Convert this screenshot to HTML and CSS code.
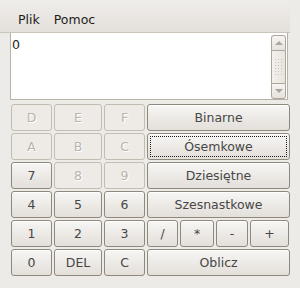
FILE: index.html
```html
<!DOCTYPE html>
<html lang="pl">
<head>
  <meta charset="UTF-8">
  <title>Kalkulator</title>
  <link rel="stylesheet" href="styles.css">
</head>
<body>
  <div class="window">
    <div class="menubar">
      <span class="menu-item">Plik</span>
      <span class="menu-item">Pomoc</span>
    </div>
    <div class="display">
      <div class="display-text">0</div>
      <div class="scrollbar">
        <div class="scroll-btn up"><span class="arrow-up"></span></div>
        <div class="scroll-thumb"><span class="grip"></span></div>
        <div class="scroll-btn down"><span class="arrow-down"></span></div>
      </div>
    </div>
    <div class="keypad">
      <div class="key disabled">D</div>
      <div class="key disabled">E</div>
      <div class="key disabled">F</div>
      <div class="key">Binarne</div>

      <div class="key disabled">A</div>
      <div class="key disabled">B</div>
      <div class="key disabled">C</div>
      <div class="key focused"><span class="focus-ring">Ósemkowe</span></div>

      <div class="key">7</div>
      <div class="key disabled">8</div>
      <div class="key disabled">9</div>
      <div class="key">Dziesiętne</div>

      <div class="key">4</div>
      <div class="key">5</div>
      <div class="key">6</div>
      <div class="key">Szesnastkowe</div>

      <div class="key">1</div>
      <div class="key">2</div>
      <div class="key">3</div>
      <div class="ops">
        <div class="key">/</div>
        <div class="key">*</div>
        <div class="key">-</div>
        <div class="key">+</div>
      </div>

      <div class="key">0</div>
      <div class="key">DEL</div>
      <div class="key">C</div>
      <div class="key">Oblicz</div>
    </div>
  </div>
</body>
</html>
```

FILE: styles.css
```css
body {
  margin: 0;
  background-color: #edebe8;
  font-family: "DejaVu Sans", sans-serif;
  font-size: 12.5px;
  line-height: 15px;
  color: #1c1c1c;
}

.window {
  width: 290px;
}

.menubar {
  height: 33px;
  display: flex;
  align-items: flex-end;
  padding: 0 0 5px 18px;
  box-sizing: border-box;
  background: linear-gradient(#efedea, #e4e0db);
  border-bottom: 1px solid #cbc4bb;
}

.menu-item {
  margin-right: 14px;
}

.display {
  display: flex;
  margin-left: 10px;
  width: 278px;
  height: 67px;
  box-sizing: border-box;
  background-color: #ffffff;
  border: 1px solid #b9b2a8;
  border-top: none;
}

.display-text {
  flex: 1;
  padding: 4px 1px;
}

.scrollbar {
  width: 15px;
  margin: 2px 1px 0 0;
  display: flex;
  flex-direction: column;
  background-color: #f2f0ed;
}

.scroll-btn {
  height: 14px;
  border: 1px solid #aca598;
  background: linear-gradient(#f6f5f3, #e6e2dd);
  display: flex;
  align-items: center;
  justify-content: center;
}

.scroll-btn.up {
  border-radius: 3px 3px 0 0;
}

.scroll-btn.down {
  border-radius: 0 0 3px 3px;
}

.arrow-up {
  border: 4px solid transparent;
  border-bottom: 4px solid #aba498;
  border-top: none;
}

.arrow-down {
  border: 4px solid transparent;
  border-top: 4px solid #aba498;
  border-bottom: none;
}

.scroll-thumb {
  flex: 1;
  border: 1px solid #aca598;
  border-top: none;
  border-bottom: none;
  background: linear-gradient(90deg, #f3f1ee, #e8e4df);
  display: flex;
  align-items: center;
  justify-content: center;
}

.grip {
  width: 9px;
  height: 18px;
  background-image: radial-gradient(#c9c3ba 35%, transparent 40%);
  background-size: 3px 3px;
}

.keypad {
  display: grid;
  grid-template-columns: 41px 48px 41px 143px;
  grid-auto-rows: 27px;
  column-gap: 2px;
  row-gap: 2px;
  margin: 4px 0 0 11px;
}

.ops {
  display: grid;
  grid-template-columns: 31px 34px 32px 39px;
  column-gap: 2px;
}

.key {
  display: flex;
  align-items: center;
  justify-content: center;
  color: #474747;
  border: 1px solid #8f887c;
  border-radius: 3px;
  background: linear-gradient(#f7f6f4, #ebe8e4 60%, #e3dfda);
  box-shadow: inset 0 1px 0 #ffffff;
}

.key.disabled {
  color: #bab4aa;
  border-color: #c3bcb1;
  background: #eeebe7;
  box-shadow: none;
  text-shadow: 1px 1px 0 #ffffff;
}

.focused {
  padding: 2px;
}

.focus-ring {
  display: flex;
  align-items: center;
  justify-content: center;
  width: 100%;
  height: 100%;
  box-sizing: border-box;
  border: 1px dotted #1c1c1c;
}
```
